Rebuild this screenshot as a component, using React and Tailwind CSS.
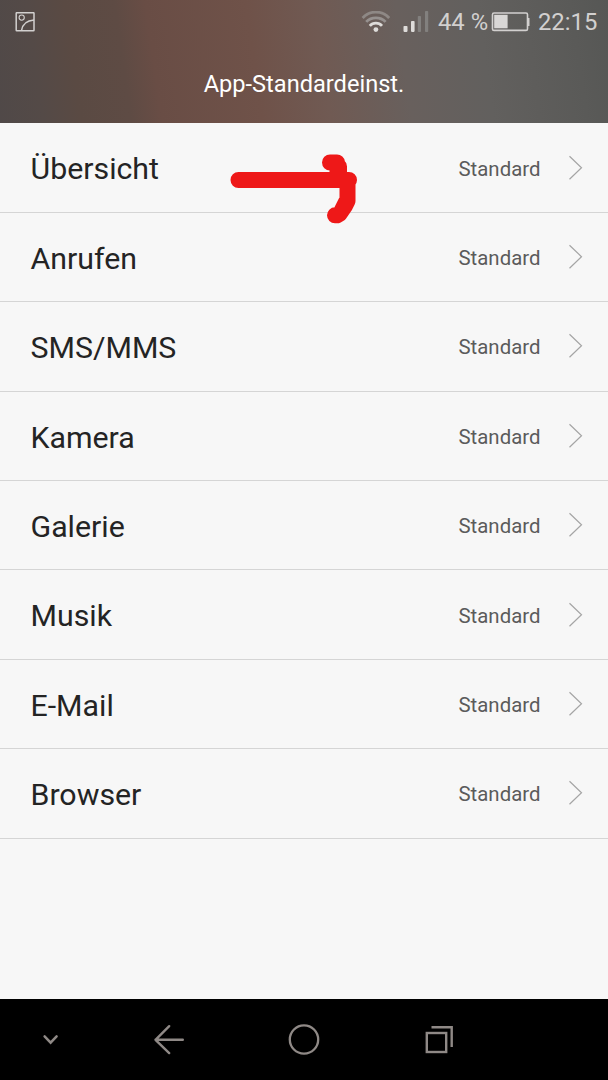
const items = ['Übersicht', 'Anrufen', 'SMS/MMS', 'Kamera', 'Galerie', 'Musik', 'E-Mail', 'Browser'];

function StatusBar() {
  return (
    <div className="flex h-[44px] items-center pl-[15px] pr-[10px] text-[#d2d0cf]">
      <svg className="h-5 w-5" viewBox="0 0 20 20" fill="none" stroke="currentColor">
        <rect x="1.2" y="0.7" width="17.8" height="18" rx="0.5" strokeWidth="1.5" />
        <circle cx="6.7" cy="5.6" r="2.6" strokeWidth="1.1" />
        <path d="M6.5 18.5C7.5 12.5 12 8.5 19 8" strokeWidth="1.5" />
      </svg>
      <svg className="ml-auto h-[22px] w-[30px]" viewBox="0 0 30 22" fill="none" strokeWidth="2.8">
        <path d="M1.6 7C9 -0.9 20.8 -0.9 28.2 7" stroke="#8e8885" />
        <path d="M5.2 10.9C10.3 5.5 19.5 5.5 24.6 10.9" stroke="#96918f" />
        <path d="M8.8 14.9C12 11.2 17.8 11.2 21 14.9" stroke="#dedcda" />
        <circle cx="14.9" cy="18.6" r="2.4" fill="#dedcda" />
      </svg>
      <svg className="ml-[12px] h-[22px] w-[26px]" viewBox="0 0 26 22">
        <rect x="0.5" y="14.9" width="4" height="6" rx="0.8" fill="#dedcda" />
        <rect x="8" y="9.9" width="3.6" height="11" rx="0.8" fill="#dedcda" />
        <rect x="14.8" y="5" width="3.2" height="16" rx="0.8" fill="#82807e" />
        <rect x="22" y="0" width="3.2" height="21" rx="0.8" fill="#82807e" />
      </svg>
      <span className="ml-[9px] w-[51px] whitespace-nowrap pt-px text-[23.8px] leading-none">44 %</span>
      <svg className="ml-[2px] h-[20px] w-[40px]" viewBox="0 0 40 20" fill="none">
        <rect x="1.5" y="1" width="35" height="17.4" rx="1.5" stroke="currentColor" strokeWidth="1.6" />
        <rect x="3.2" y="2.8" width="13.4" height="13.5" fill="#d9d7d6" />
        <path d="M37.5 6v8" stroke="currentColor" strokeWidth="2" />
      </svg>
      <span className="ml-[7px] w-[60px] whitespace-nowrap pt-px text-[23.8px] leading-none">22:15</span>
    </div>
  );
}

function Row({ label }) {
  return (
    <li className="flex h-[89.4px] items-center border-b border-[#d5d5d5] pl-[30.5px] pr-[25px]">
      <span className="pt-[3.6px] text-[30.3px] leading-none text-[#242424]">{label}</span>
      <span className="ml-auto w-[81.5px] whitespace-nowrap pt-[2.2px] text-[20.4px] leading-none text-[#5b5b5b]">Standard</span>
      <svg className="ml-[28px] h-[26px] w-[15px]" viewBox="0 0 15 26" fill="none" stroke="#a5a5a5" strokeWidth="1.2">
        <path d="M1.5 1.2 13.5 12.7 1.5 24.2" />
      </svg>
    </li>
  );
}

function NavigationBar() {
  return (
    <nav className="flex h-[81px] items-center bg-black text-[#8f8986]">
      <svg className="ml-[42px] h-[12px] w-[17px]" viewBox="0 0 17 12" fill="none" stroke="currentColor" strokeWidth="2.5" strokeLinecap="round">
        <path d="M2.6 2.4 8.6 8.6 14.6 2.4" />
      </svg>
      <svg className="ml-[94px] h-8 w-8" viewBox="0 0 32 32" fill="none" stroke="currentColor" strokeWidth="2.4" strokeLinecap="round" strokeLinejoin="round">
        <path d="M16.2 2.2 2.5 15.8 16.2 29.1M2.5 15.8H29.8" />
      </svg>
      <svg className="ml-[103px] h-8 w-8" viewBox="0 0 32 32" fill="none" stroke="currentColor" strokeWidth="2.3">
        <circle cx="16" cy="15.5" r="14.2" />
      </svg>
      <svg className="ml-[104px] h-8 w-8" viewBox="0 0 32 32" fill="none" stroke="currentColor" strokeWidth="2.4">
        <rect x="2.8" y="9" width="19.4" height="19" />
        <path d="M7.5 3.3h20.2v19.8" />
      </svg>
    </nav>
  );
}

export default function App() {
  return (
    <div className="relative flex h-[1080px] w-[608px] flex-col overflow-hidden bg-[#f7f7f7] font-['Roboto',sans-serif]">
      <header className="h-[123px] bg-[linear-gradient(82deg,#504948_0%,#544a47_7%,#5a4a43_13%,#5e4b44_21%,#694d45_26%,#6f5249_42%,#705a53_53%,#68605d_66%,#62605e_79%,#5a5a58_94%,#565755_100%)]">
        <StatusBar />
        <h1 className="pt-[29px] text-center text-[23.6px] leading-none text-white">App-Standardeinst.</h1>
      </header>
      <ul className="flex-1 pt-[0.5px]">
        {items.map((label) => <Row key={label} label={label} />)}
      </ul>
      <NavigationBar />
      <svg className="absolute left-[230px] top-[153px] h-[72px] w-[128px]" viewBox="0 0 128 72" fill="none" stroke="#ee1818" strokeWidth="16" strokeLinecap="round" strokeLinejoin="round">
        <path d="M8.5 27H119M100 9.5H107L107.5 14V27M117.5 27V48L115 53 109.5 61 107 62.3H105M104 9.5 109 13.5V27M116 49 112 57" />
      </svg>
    </div>
  );
}
